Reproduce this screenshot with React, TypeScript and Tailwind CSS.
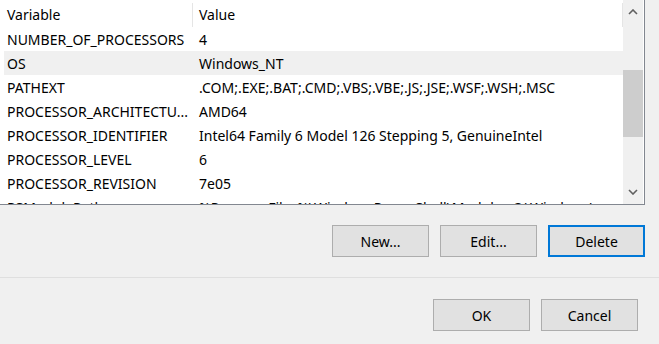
import React from "react";

const rows: [string, string][] = [
  ["NUMBER_OF_PROCESSORS", "4"],
  ["OS", "Windows_NT"],
  ["PATHEXT", ".COM;.EXE;.BAT;.CMD;.VBS;.VBE;.JS;.JSE;.WSF;.WSH;.MSC"],
  ["PROCESSOR_ARCHITECTU...", "AMD64"],
  ["PROCESSOR_IDENTIFIER", "Intel64 Family 6 Model 126 Stepping 5, GenuineIntel"],
  ["PROCESSOR_LEVEL", "6"],
  ["PROCESSOR_REVISION", "7e05"],
  ["PSModulePath", "%ProgramFiles%\\WindowsPowerShell\\Modules;C:\\Windows\\..."],
];

function Btn({ label, primary }: { label: string; primary?: boolean }) {
  return (
    <div
      className={
        "w-[97px] h-[32px] flex items-center justify-center bg-[#e1e1e1] text-[14px] text-black " +
        (primary ? "border-2 border-[#0078d7]" : "border border-[#adadad]")
      }
    >
      {label}
    </div>
  );
}

export default function App() {
  return (
    <div
      className="w-[659px] h-[344px] bg-[#f0f0f0] overflow-hidden flex flex-col"
      style={{ fontFamily: '"Noto Sans", "Open Sans", sans-serif' }}
    >
      <div className="w-[645px] h-[205px] flex border-r border-b border-[#828790] bg-white shrink-0">
        <div className="flex-1 overflow-hidden flex flex-col text-[14px] text-black">
          <div className="h-[27px] flex items-center shrink-0">
            <div className="w-[193px] shrink-0 pl-[7px] h-[24px] mt-[2px] flex items-center border-r border-[#e5e5e5]">Variable</div>
            <div className="flex-1 pl-[6px] h-[24px] mt-[2px] flex items-center border-r border-[#e5e5e5]">Value</div>
          </div>
          {rows.map(([k, v], i) => (
            <div
              key={i}
              className={
                "h-[24px] shrink-0 flex items-center ml-[4px] whitespace-nowrap overflow-hidden " +
                (k === "OS" ? "bg-[#f0f0f0]" : "")
              }
            >
              <div className="w-[189px] shrink-0 pl-[3px] overflow-hidden">{k}</div>
              <div className="pl-[6px] shrink-0">{v}</div>
            </div>
          ))}
        </div>
        <div className="w-[20px] bg-[#f0f0f0] flex flex-col shrink-0 mr-[1px]">
          <div className="h-[24px] flex items-center justify-center">
            <svg width="10" height="6" viewBox="0 0 10 6">
              <path d="M1 5 L5 1 L9 5" fill="none" stroke="#606060" strokeWidth="1.6" />
            </svg>
          </div>
          <div className="h-[46px]" />
          <div className="h-[67px] bg-[#cdcdcd]" />
          <div className="flex-1" />
          <div className="h-[24px] flex items-center justify-center">
            <svg width="10" height="6" viewBox="0 0 10 6">
              <path d="M1 1 L5 5 L9 1" fill="none" stroke="#606060" strokeWidth="1.6" />
            </svg>
          </div>
        </div>
      </div>
      <div className="w-[645px] flex justify-end gap-[11px] mt-[20px] shrink-0">
        <Btn label="New..." />
        <Btn label="Edit..." />
        <Btn label="Delete" primary />
      </div>
      <div className="h-[1px] bg-[#dfdfdf] mt-[20px] shrink-0" />
      <div className="flex justify-end gap-[11px] mt-[21px] pr-[21px] shrink-0">
        <Btn label="OK" />
        <Btn label="Cancel" />
      </div>
    </div>
  );
}
